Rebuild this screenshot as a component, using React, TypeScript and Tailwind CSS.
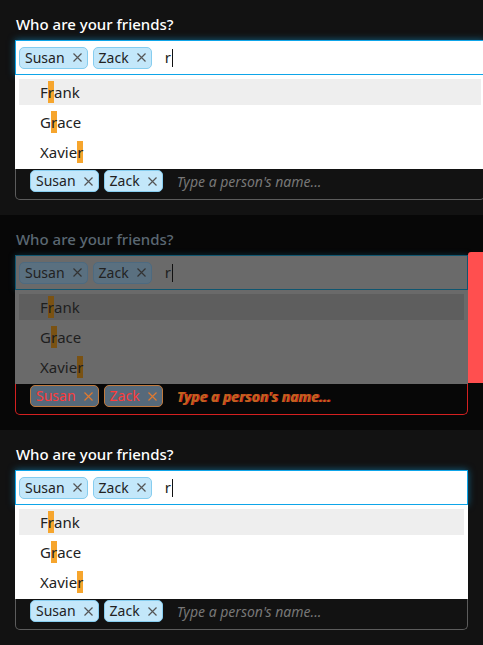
import React from 'react';

type Variant = 'top' | 'diff' | 'bottom';

const font = { fontFamily: '"Noto Sans", "Open Sans", sans-serif' };

const Cross = ({ color }: { color: string }) => (
  <svg width="9" height="9" viewBox="0 0 9 9" className="shrink-0">
    <path d="M0.5 0.5L8.5 8.5M8.5 0.5L0.5 8.5" stroke={color} strokeWidth="1.2" />
  </svg>
);

const Tag = ({ name, diff }: { name: string; diff?: boolean }) => (
  <span
    className={
      'flex h-[22px] items-center gap-[8px] rounded-[5px] border pl-[5px] pr-[5px] text-[14px] leading-none ' +
      (diff
        ? 'border-[#c07a3e] bg-[#56697a] text-[#ff3b3b]'
        : 'border-[#86cdef] bg-[#c3e7fa] text-[#222]')
    }
  >
    {name}
    <Cross color={diff ? '#e07a30' : '#555'} />
  </span>
);

const DimTag = ({ name }: { name: string }) => (
  <span className="flex h-[22px] items-center gap-[8px] rounded-[5px] border border-[#4d6a80] bg-[#5a7080] pl-[5px] pr-[5px] text-[14px] leading-none text-[#222]">
    {name}
    <Cross color="#333" />
  </span>
);

const Option = ({ before, after, active, dim }: { before: string; after: string; active?: boolean; dim?: boolean }) => (
  <div
    className={
      'flex h-[26px] items-center pl-[21px] text-[15px] ' +
      (active ? (dim ? 'bg-[#5e5e5e]' : 'bg-[#eeeeee]') : '') +
      (dim ? ' text-[#1e1e1e]' : ' text-[#222]')
    }
  >
    {before}
    <span className={dim ? 'bg-[#7a5213]' : 'bg-[#f6a52d]'}>r</span>
    {after}
  </div>
);

const Panel = ({ variant }: { variant: Variant }) => {
  const diff = variant === 'diff';
  const width = variant === 'top' ? 'w-[470px]' : 'w-[453px]';
  return (
    <div
      className={'relative h-[215px] overflow-hidden pl-[15px] pt-[13px] ' + (diff ? 'bg-[#070707]' : 'bg-[#121212]')}
      style={font}
    >
      <div
        className={
          'pl-px text-[15px] font-medium leading-[22px] ' + (diff ? 'text-[#5b6873]' : 'text-white')
        }
      >
        Who are your friends?
      </div>
      <div className={'mt-[5px] flex flex-col ' + width}>
        <div
          className={
            'flex h-[35px] items-center gap-[5px] border pl-[3px] ' +
            (diff
              ? 'border-[#0f5670] bg-[#6a6a6a] shadow-[0_0_6px_rgba(14,120,160,0.35)]'
              : 'border-[#0ea5e9] bg-white shadow-[0_0_7px_rgba(14,165,233,0.55)]')
          }
        >
          {diff ? <DimTag name="Susan" /> : <Tag name="Susan" />}
          {diff ? <DimTag name="Zack" /> : <Tag name="Zack" />}
          <span className="ml-[8px] flex items-center text-[15px] text-[#222]">
            r<span className="ml-px h-[18px] w-px bg-[#111]" />
          </span>
        </div>
        <div className={'flex flex-col gap-[4px] px-[4px] py-[4px] ' + (diff ? 'bg-[#6a6a6a]' : 'bg-white')}>
          <Option before="F" after="ank" active dim={diff} />
          <Option before="G" after="ace" dim={diff} />
          <Option before="Xavie" after="" dim={diff} />
        </div>
        <div
          className={
            'flex h-[31px] items-center gap-[5px] rounded-b-[5px] border border-t-0 pb-[6px] pl-[14px] ' +
            (diff ? 'border-[#d42020]' : 'border-[#5c5c5c]')
          }
        >
          <Tag name="Susan" diff={diff} />
          <Tag name="Zack" diff={diff} />
          <span
            className={
              'ml-[9px] text-[14px] italic ' +
              (diff ? 'font-bold text-[#c0641e] [text-shadow:1px_0_0_#d42020]' : 'text-[#777]')
            }
          >
            Type a person's name...
          </span>
        </div>
      </div>
      {diff && (
        <div className="absolute left-[468px] top-[37px] h-[131px] w-[15px] rounded-tl-[3px] bg-[#ff4f4f]" />
      )}
    </div>
  );
};

export default function App() {
  return (
    <div className="flex h-[645px] w-[483px] flex-col overflow-hidden">
      <Panel variant="top" />
      <Panel variant="diff" />
      <Panel variant="bottom" />
    </div>
  );
}
